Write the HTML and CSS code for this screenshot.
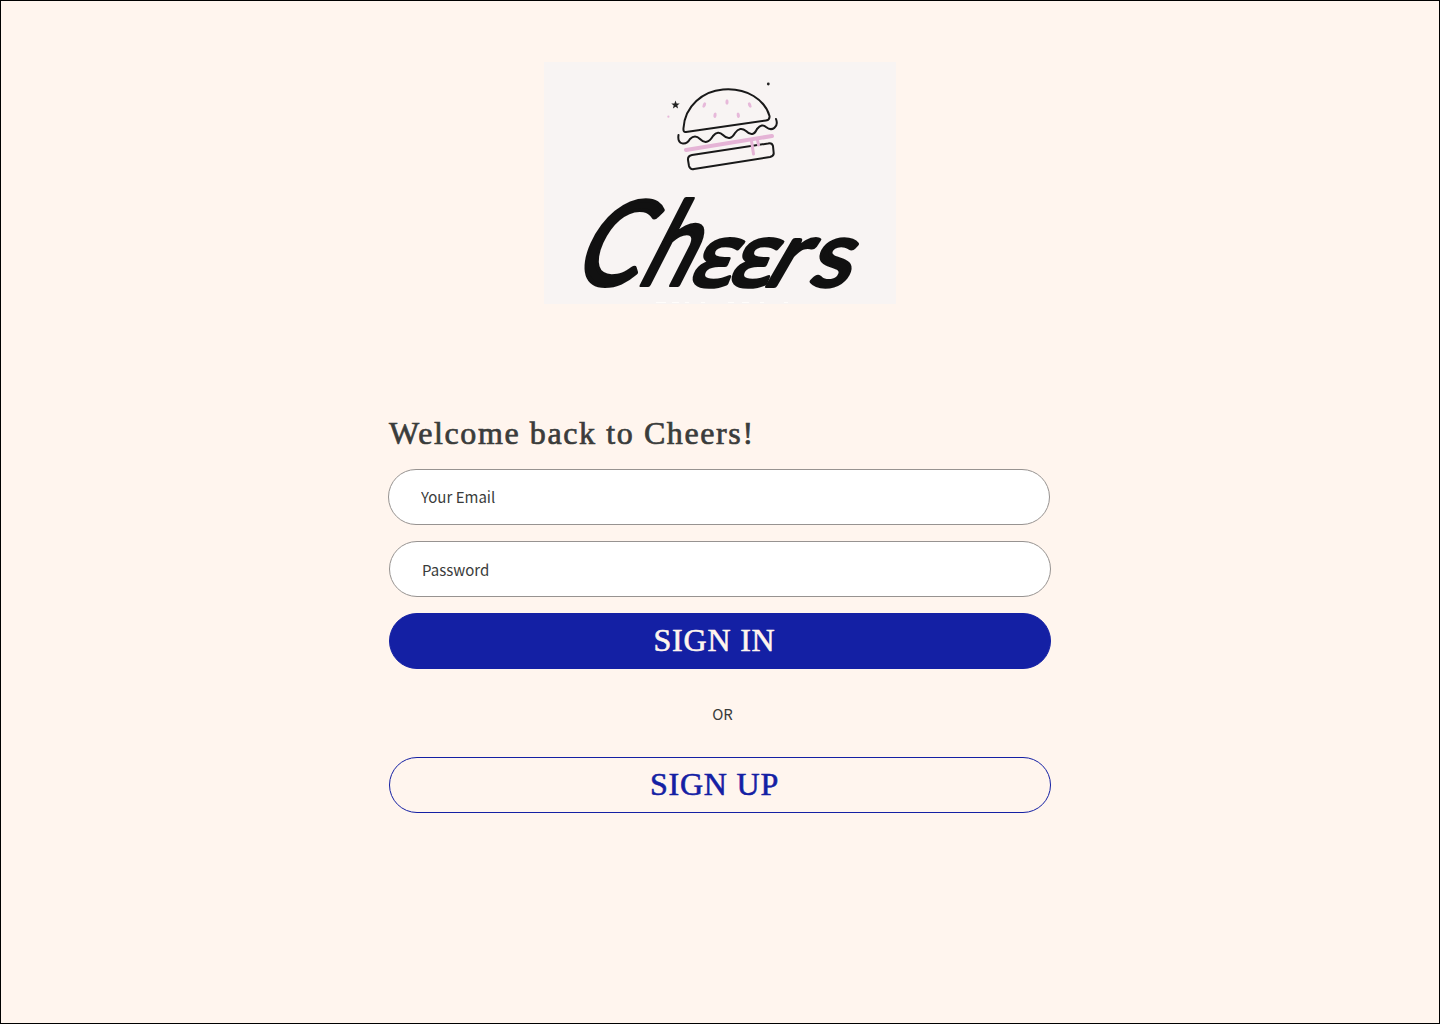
FILE: index.html
```html
<!DOCTYPE html>
<html lang="en">
<head>
<meta charset="utf-8">
<title>Cheers – Sign in</title>
<link rel="stylesheet" href="styles.css">
</head>
<body>
<main class="page">
  <svg class="logo" viewBox="0 0 352 242" role="img" aria-label="Cheers">
    <rect width="352" height="242" fill="#f8f4f3"/>
    <g fill="none" stroke="#191919" stroke-width="2" stroke-linecap="round" stroke-linejoin="round">
      <path d="M142 70Q139 70.500 139.500 66C141 44 159 29 179 27.500C203 25.500 221 38 225.500 54Q226 58 222 58.500Z"/>
      <path d="M134.500 73C133 83 142 84 146 77Q151 72 156 77Q163 84 169 74Q174 68 179 73Q186 80 191 71Q196 64 202 69Q209 76 213 67Q218 61 222 65C228 70 235 65 232 57"/>
      <path d="M148 93L224 81.500Q228 80.500 229 84L229.700 91Q230 94 226 95L150 107Q146 108 145 104L144 98Q143.500 94 148 93Z"/>
    </g>
    <g fill="none" stroke="#e5b4d6" stroke-width="4" stroke-linecap="round">
      <path d="M142 88L228 74"/>
      <path d="M207.500 79L209.500 92M213.500 78L214.500 83" stroke-width="3"/>
    </g>
    <g fill="#e7b9da">
      <ellipse cx="160.300" cy="43" rx="1.600" ry="2.800" transform="rotate(22 160.300 43)"/>
      <ellipse cx="183" cy="40" rx="1.600" ry="2.800"/>
      <ellipse cx="205.700" cy="43" rx="1.600" ry="2.800" transform="rotate(-22 205.700 43)"/>
      <ellipse cx="171" cy="53.300" rx="1.600" ry="2.800" transform="rotate(8 171 53.300)"/>
      <ellipse cx="194.300" cy="53.300" rx="1.600" ry="2.800" transform="rotate(-8 194.300 53.300)"/>
      <circle cx="124.400" cy="54.700" r="1.100"/>
    </g>
    <path d="M131.500 38.500l1.100 2.900 3.100.1-2.400 2 .8 3-2.600-1.700-2.600 1.700.8-3-2.400-2 3.100-.1z" fill="#222"/>
    <circle cx="224.300" cy="22" r="1.400" fill="#222"/>
    <g class="wordmark">
      <text class="tall" transform="translate(25 223) skewX(-24) scale(.82 1)">C</text>
      <text class="tall" transform="translate(91 223) skewX(-27) scale(.76 1)">h</text>
      <text class="open" transform="translate(143 224) skewX(-22) scale(1 1)">ɛ</text>
      <text class="open" transform="translate(182 224) skewX(-22) scale(1 1)">ɛ</text>
      <text class="small" transform="translate(217 224) skewX(-30) scale(.98 1)">r</text>
      <text class="small" transform="translate(263 224) skewX(-18) scale(1.04 1)">s</text>
    </g>
    <path d="M112 240.500h10m6 0h7m6 0h4m12 0h4m23 0h6m8 0h7m11 0h4m20 0h4" stroke="#fffdfb"/>
  </svg>
  <form class="form" onsubmit="return false">
    <h1 class="title">Welcome back to Cheers!</h1>
    <input class="field field-email" type="email" placeholder="Your Email" aria-label="Your Email">
    <input class="field" type="password" placeholder="Password" aria-label="Password">
    <button class="button button-primary" type="submit">SIGN IN</button>
    <p class="divider">OR</p>
    <button class="button button-outline" type="button">SIGN UP</button>
  </form>
</main>
</body>
</html>
```
FILE: styles.css
```css
* { box-sizing: border-box; }

body {
  margin: 0;
  background: #fff5ee;
}

.page {
  min-height: 1024px;
  padding-top: 61px;
  border: 1px solid #000;
  display: flex;
  flex-direction: column;
  align-items: center;
  gap: 110px;
}

.logo {
  display: block;
  width: 352px;
  height: 242px;
  overflow: visible;
}

.wordmark {
  font-family: Lato, sans-serif;
  font-weight: 400;
  fill: #111;
  stroke: #111;
  stroke-width: 4px;
  stroke-linejoin: round;
}

.tall { font-size: 117px; }

.small { font-size: 91px; }

.open { font: 400 86px "Noto Sans", sans-serif; }

.form {
  width: 662px;
  display: flex;
  flex-direction: column;
  gap: 16px;
}

.title {
  margin: 0;
  height: 39px;
  font: 400 32px/39px "Liberation Serif", serif;
  letter-spacing: 1.6px;
  white-space: nowrap;
  color: #3a3c3b;
  -webkit-text-stroke: 0.7px #3a3c3b;
}

.field {
  width: 662px;
  height: 56px;
  padding: 0 32px;
  border: 1px solid #979391;
  border-radius: 28px;
  background: #fff;
  font: 400 15px/24px "Noto Sans CJK SC", sans-serif;
  color: #3a3c3b;
  outline: 0;
}

.field::placeholder { color: #3a3c3b; opacity: 1; }

.field-email {
  margin-left: -1px;
  padding-bottom: 2px;
}

.button {
  height: 56px;
  padding: 0 11px 2px 0;
  border: 1px solid #1420a4;
  border-radius: 28px;
  font: 400 32px/40px "Liberation Serif", serif;
  letter-spacing: 0.8px;
}

.button-primary {
  background: #1420a4;
  color: #fff5ee;
  -webkit-text-stroke: 0.6px #fff5ee;
}

.button-outline {
  background: transparent;
  color: #1420a4;
  -webkit-text-stroke: 0.6px #1420a4;
}

.divider {
  margin: 0;
  height: 56px;
  padding: 17px 0 0 5px;
  font: 400 15px/24px "Noto Sans CJK SC", sans-serif;
  text-align: center;
  color: #3a3c3b;
}
```
